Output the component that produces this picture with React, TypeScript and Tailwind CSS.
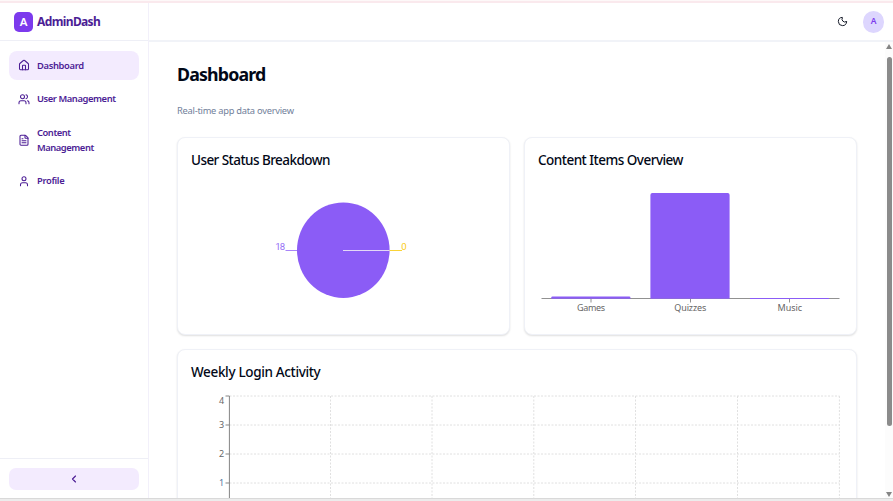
import React from 'react';
import { House, Users, FileText, User, ChevronLeft, Moon } from 'lucide-react';

const nav = [
  { label: 'Dashboard', icon: House, box: 'h-[29px] pt-px bg-[#f3ebfe] tracking-[-0.34px]' },
  { label: 'User Management', icon: Users, box: 'h-[29px] whitespace-nowrap tracking-[-0.42px]' },
  { label: 'Content Management', icon: FileText, box: 'h-[43px] tracking-[-0.45px]' },
  { label: 'Profile', icon: User, box: 'h-[29px] tracking-[-0.34px]' },
];

function Card({ title, titleClass, className, children }: { title: string; titleClass: string; className: string; children: React.ReactNode }) {
  return (
    <section className={`rounded-[8px] border border-[#eff1f7] bg-white shadow-[0_1px_2px_rgba(0,0,0,0.13)] ${className}`}>
      <h2 className={`flex h-[44px] items-center pl-[13px] text-[13.5px] font-medium text-[#020817] ${titleClass}`}>{title}</h2>
      {children}
    </section>
  );
}

function PieChart() {
  return (
    <svg className="block h-[152px] w-[331px] font-['Roboto',sans-serif]" viewBox="178 182 331 152">
      <ellipse cx="343.3" cy="250.2" rx="46.3" ry="47.8" fill="#8b5cf6" />
      <path d="M343 250.5H389.7" stroke="#e3d8f6" strokeWidth="1" />
      <path d="M285.5 250.5H297" stroke="#8b5cf6" strokeWidth="1" opacity=".75" />
      <path d="M389.7 250.5H402" stroke="#facc15" strokeWidth="1" opacity=".85" />
      <text x="275.2" y="250" fontSize="9.6" fill="#8b5cf6" textLength="10" opacity=".9">18</text>
      <text x="401.2" y="250" fontSize="9.6" fill="#facc15">0</text>
    </svg>
  );
}

function BarChart() {
  return (
    <svg className="block h-[152px] w-[331px]" viewBox="525 182 331 152">
      <path d="M541.5 298.5H839.5M591 298.5V302.5M690.5 298.5V302.5M789.5 298.5V302.5" stroke="#858585" strokeWidth=".9" fill="none" />
      <path d="M551.3 298.8V297.5Q551.3 296.5 552.5 296.5H629.2Q630.4 296.5 630.4 297.5V298.8Z" fill="#8b5cf6" />
      <path d="M650.4 298.8V195Q650.4 193 652.4 193H727.6Q729.6 193 729.6 195V298.8Z" fill="#8b5cf6" />
      <rect x="750" y="298" width="79" height="1" fill="#8b5cf6" />
      <g fontSize="9" fill="#666" textAnchor="middle">
        <text x="591" y="310.6" textLength="28">Games</text>
        <text x="690.3" y="310.6" textLength="32">Quizzes</text>
        <text x="789.8" y="310.6" textLength="24.5">Music</text>
      </g>
    </svg>
  );
}

function LoginChart() {
  return (
    <svg className="block h-[120px] w-[678px]" viewBox="178 394 678 120">
      <g stroke="#e0e0e0" strokeWidth="1" strokeDasharray="2 1.5" fill="none">
        <path d="M229.5 396H839.5M229.5 425H839.5M229.5 454H839.5M229.5 483H839.5" />
        <path d="M330.5 396V514M432 396V514M533.8 396V514M635.5 396V514M737.5 396V514M839.4 396V514" />
      </g>
      <path d="M229.4 396V514M225.5 396H229.4M225.5 425H229.4M225.5 454H229.4M225.5 483H229.4" stroke="#858585" strokeWidth="1" fill="none" />
      <g fontSize="9" fill="#666" textAnchor="end">
        <text x="224.2" y="403.7">4</text>
        <text x="224.2" y="428.3">3</text>
        <text x="224.2" y="457.3">2</text>
        <text x="224.2" y="486.3" fill="#5577a0">1</text>
      </g>
    </svg>
  );
}

export default function App() {
  return (
    <div className="flex h-[501px] w-[893px] flex-col overflow-hidden bg-white font-['Noto_Sans','Open_Sans',sans-serif]">
      <div className="h-[3px] shrink-0 border-t border-[#fdf8f8] bg-[#fae9ed]" />
      <div className="flex min-h-0 flex-1">
        <aside className="flex w-[149px] shrink-0 flex-col border-r border-[#f2f0fa]">
          <div className="flex h-[38px] shrink-0 items-center gap-[4px] border-b border-[#eeeff6] pl-[14px]">
            <div className="flex h-[20px] w-[19px] items-center justify-center rounded-[5px] bg-[#7c3aed] text-[11.5px] font-semibold text-white">A</div>
            <span className="pt-px text-[12px] font-bold tracking-[-0.62px] text-[#4c1d95]">AdminDash</span>
          </div>
          <nav className="flex flex-1 flex-col gap-[5px] px-[9px] pt-[10px]">
            {nav.map(({ label, icon: Icon, box }) => (
              <a key={label} className={`flex items-center gap-[7px] rounded-[8px] pl-[9px] pr-[24px] text-[9.4px] leading-[14.5px] font-semibold text-[#4c1d95] ${box}`}>
                <Icon className="mb-px h-[12.5px] w-[12px] shrink-0" strokeWidth={2.1} />
                <span>{label}</span>
              </a>
            ))}
          </nav>
          <div className="flex h-[40px] shrink-0 border-t border-[#eeeff6] px-[9px] pt-[9px]">
            <button className="flex h-[22px] w-full items-center justify-center rounded-[7px] bg-[#f3ebfe] text-[#4c1d95]">
              <ChevronLeft className="h-[12px] w-[12px]" strokeWidth={2.3} />
            </button>
          </div>
        </aside>
        <div className="flex min-w-0 flex-1 flex-col">
          <header className="flex h-[39px] shrink-0 items-center justify-end gap-[15px] border-b-2 border-[#f1f3f8] pr-[9px]">
            <Moon className="h-[11px] w-[11px] text-[#020817]" strokeWidth={2} />
            <div className="flex h-[22px] w-[21px] items-center justify-center rounded-full bg-[#ddd6fe] text-[8.5px] font-semibold text-[#7c3aed]">A</div>
          </header>
          <div className="flex min-h-0 flex-1">
            <main className="min-w-0 flex-1 overflow-hidden pl-[28px]">
              <h1 className="mt-[18px] h-[28px] text-[17.8px] leading-[28px] font-bold tracking-[-0.83px] text-[#020817]">Dashboard</h1>
              <p className="mt-[16px] h-[14px] text-[9.3px] leading-[14px] tracking-[-0.25px] text-[#71809a]">Real-time app data overview</p>
              <div className="mt-[19px] flex gap-[14px]">
                <Card title="User Status Breakdown" titleClass="tracking-[-0.55px]" className="h-[198px] w-[333px]"><PieChart /></Card>
                <Card title="Content Items Overview" titleClass="tracking-[-0.51px]" className="h-[198px] w-[333px]"><BarChart /></Card>
              </div>
              <Card title="Weekly Login Activity" titleClass="pt-px tracking-[-0.34px]" className="mt-[14px] h-[220px] w-[680px]"><LoginChart /></Card>
            </main>
            <div className="flex w-[8px] shrink-0 flex-col items-center bg-[#fcfcfc] pt-[2px] pb-[1px]">
              <svg className="h-[5px] w-[6px]" viewBox="0 0 6 5"><path d="M3 0L6 5H0Z" fill="#858585" /></svg>
              <div className="mt-[8px] h-[369px] w-[5px] rounded-full bg-[#8b8b8b]" />
              <svg className="mt-auto h-[5px] w-[6px]" viewBox="0 0 6 5"><path d="M3 5L6 0H0Z" fill="#858585" /></svg>
            </div>
          </div>
        </div>
      </div>
      <div className="h-[3px] shrink-0 border-t border-[#d9d9d9] bg-[#ececec]" />
    </div>
  );
}
